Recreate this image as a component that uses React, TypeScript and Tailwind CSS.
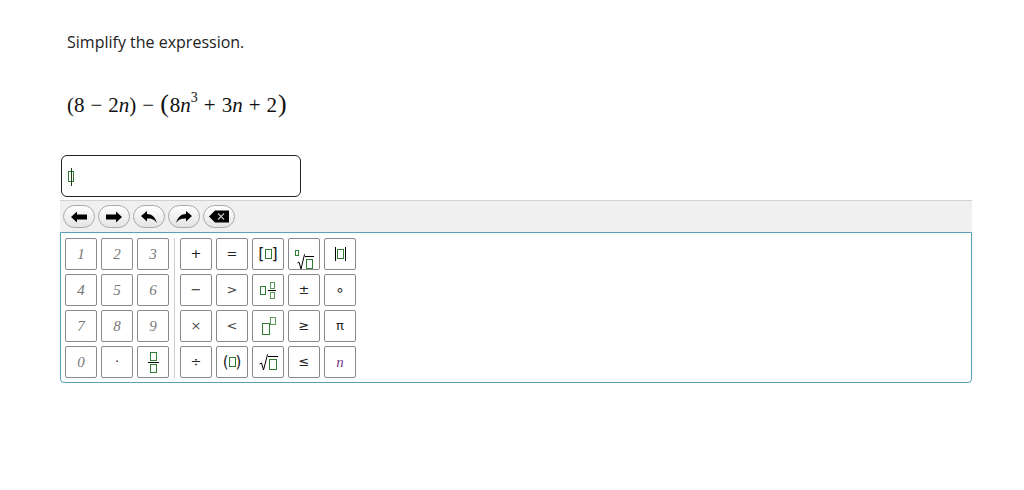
import React from 'react';

const Box = ({ c = 'border-[#2e7d32]', w = 'w-[7px]', h = 'h-[10px]' }: { c?: string; w?: string; h?: string }) => (
  <span className={`inline-block shrink-0 ${w} ${h} border ${c} box-border`} />
);

const Key: React.FC<{ children: React.ReactNode; className?: string }> = ({ children, className = '' }) => (
  <div
    className={`w-[32px] h-[32px] border border-[#8a8a8a] rounded-[2px] bg-white flex items-center justify-center ${className}`}
  >
    {children}
  </div>
);

const Num = ({ v }: { v: string }) => (
  <Key>
    <span className="italic text-[15px] text-[#777]" style={{ fontFamily: '"Liberation Serif", serif' }}>
      {v}
    </span>
  </Key>
);

const Op = ({ v, cls = '' }: { v: string; cls?: string }) => (
  <Key>
    <span className={`text-[13px] text-[#222] ${cls}`} style={{ fontFamily: '"DejaVu Sans", sans-serif' }}>
      {v}
    </span>
  </Key>
);

const Frac = () => (
  <span className="flex flex-col items-center leading-none">
    <Box w="w-[7px]" h="h-[9px]" />
    <span className="w-[11px] h-px bg-black my-[1px]" />
    <Box w="w-[7px]" h="h-[9px]" />
  </span>
);

const NavBtn: React.FC<{ children: React.ReactNode }> = ({ children }) => (
  <div className="w-[32px] h-[23px] rounded-full border border-[#a8a8a8] bg-gradient-to-b from-white to-[#e4e4e4] flex items-center justify-center">
    {children}
  </div>
);

const Left = () => (
  <svg width="18" height="12" viewBox="0 0 18 12">
    <path d="M1 6 L7 0.5 V3.5 H17 V8.5 H7 V11.5 Z" fill="#000" />
  </svg>
);
const Right = () => (
  <svg width="18" height="12" viewBox="0 0 18 12">
    <path d="M17 6 L11 0.5 V3.5 H1 V8.5 H11 V11.5 Z" fill="#000" />
  </svg>
);
const Undo = () => (
  <svg width="18" height="14" viewBox="0 0 18 14">
    <path d="M1 6 L7 1 V4 C12 4 15 7 17 13 C14 9 11 8.5 7 8.5 V11.5 Z" fill="#000" />
  </svg>
);
const Redo = () => (
  <svg width="18" height="14" viewBox="0 0 18 14">
    <path d="M17 6 L11 1 V4 C6 4 3 7 1 13 C4 9 7 8.5 11 8.5 V11.5 Z" fill="#000" />
  </svg>
);
const Del = () => (
  <svg width="22" height="13" viewBox="0 0 22 13">
    <path d="M1 6.5 L7 0.5 H21 V12.5 H7 Z" fill="#000" />
    <path d="M10 3.5 L16 9.5 M16 3.5 L10 9.5" stroke="#bbb" strokeWidth="1.3" />
  </svg>
);

export default function App() {
  return (
    <div className="w-[1024px] h-[490px] bg-white" style={{ fontFamily: '"Open Sans", sans-serif' }}>
      <div className="pl-[60px] pr-[52px] pt-[30px]">
        <p className="pl-[7px] text-[16px] leading-[24px] text-[#222]">Simplify the expression.</p>
        <div
          className="pl-[7px] mt-[36px] h-[30px] text-[21px] leading-[30px] text-[#111] flex items-center"
          style={{ fontFamily: '"Liberation Serif", serif' }}
        >
          <span>(8</span>
          <span className="mx-[6px]">−</span>
          <span>2</span>
          <span className="italic">n</span>
          <span>)</span>
          <span className="mx-[6px]">−</span>
          <span className="text-[26px] leading-none relative -top-[1px] mr-[1px]">(</span>
          <span>8</span>
          <span className="italic">n</span>
          <span className="text-[14px] relative -top-[7px]">3</span>
          <span className="mx-[6px]">+</span>
          <span>3</span>
          <span className="italic">n</span>
          <span className="mx-[6px]">+</span>
          <span>2</span>
          <span className="text-[26px] leading-none relative -top-[1px] ml-[1px]">)</span>
        </div>
        <div className="ml-px mt-[35px] w-[240px] h-[42px] border border-[#222] rounded-[6px] flex items-center pl-[6px]">
          <span className="relative flex items-center">
            <Box w="w-[6px]" h="h-[11px]" />
            <span className="absolute left-[3px] -top-[3px] w-px h-[18px] bg-[#1b3d1b]" />
          </span>
        </div>
        <div className="mt-[3px] h-[32px] bg-[#f0f0f0] border-t border-[#d2d2d2] flex items-center gap-[3px] pl-[3px]">
          <NavBtn><Left /></NavBtn>
          <NavBtn><Right /></NavBtn>
          <NavBtn><Undo /></NavBtn>
          <NavBtn><Redo /></NavBtn>
          <NavBtn><Del /></NavBtn>
        </div>
        <div className="h-[151px] border border-[#5b9fbb] rounded-b-[4px] flex pt-[5px] pl-[4px]">
          <div className="grid grid-cols-3 gap-[4px] auto-rows-[32px] pr-[5px] border-r border-[#cfcfcf] h-[140px]">
            <Num v="1" /><Num v="2" /><Num v="3" />
            <Num v="4" /><Num v="5" /><Num v="6" />
            <Num v="7" /><Num v="8" /><Num v="9" />
            <Num v="0" />
            <Op v="·" />
            <Key><Frac /></Key>
          </div>
          <div className="grid grid-cols-5 gap-[4px] auto-rows-[32px] pl-[5px]">
            <Op v="+" />
            <Op v="=" />
            <Key>
              <span className="flex items-center text-[16px] text-[#222]" style={{ fontFamily: '"DejaVu Sans", sans-serif' }}>
                [<Box w="w-[7px]" h="h-[10px]" />]
              </span>
            </Key>
            <Key>
              <span className="flex items-end">
                <span className="mb-[8px]"><Box w="w-[4px]" h="h-[6px]" /></span>
                <svg width="8" height="16" viewBox="0 0 8 16" className="-ml-[2px] shrink-0">
                  <path d="M0.5 9 L2 8 L4 15 L7.5 0.5 H8" stroke="#000" fill="none" strokeWidth="1" />
                </svg>
                <span className="border-t border-black pt-[2px] px-[1px] flex items-center mb-[1px]">
                  <Box w="w-[7px]" h="h-[10px]" />
                </span>
              </span>
            </Key>
            <Key>
              <span className="flex items-center gap-[1px]">
                <span className="w-px h-[14px] bg-black shrink-0" />
                <Box w="w-[7px]" h="h-[10px]" />
                <span className="w-px h-[14px] bg-black shrink-0" />
              </span>
            </Key>

            <Op v="−" />
            <Op v=">" cls="text-[#444]" />
            <Key>
              <span className="flex items-center gap-[2px]">
                <Box w="w-[6px]" h="h-[9px]" />
                <span className="flex flex-col items-center">
                  <Box w="w-[5px]" h="h-[7px]" c="border-[#5a9a5a]" />
                  <span className="w-[8px] h-px bg-black my-[1px]" />
                  <Box w="w-[5px]" h="h-[7px]" c="border-[#5a9a5a]" />
                </span>
              </span>
            </Key>
            <Op v="±" />
            <Op v="∘" cls="text-[15px]" />

            <Op v="×" cls="text-[#555]" />
            <Op v="<" cls="text-[#444]" />
            <Key>
              <span className="flex items-end h-[18px] pl-[1px]">
                <span className="flex"><Box w="w-[8px]" h="h-[12px]" /></span>
                <span className="flex self-start">
                  <Box w="w-[6px]" h="h-[8px]" c="border-[#5a9a5a]" />
                </span>
              </span>
            </Key>
            <Op v="≥" />
            <Op v="π" />

            <Op v="÷" />
            <Key>
              <span className="flex items-center text-[15px] text-[#222]" style={{ fontFamily: '"DejaVu Sans", sans-serif' }}>
                (<Box w="w-[7px]" h="h-[10px]" />)
              </span>
            </Key>
            <Key>
              <span className="flex items-end">
                <svg width="9" height="17" viewBox="0 0 9 17" className="shrink-0">
                  <path d="M0.5 10 L2.5 9 L4.5 16 L8.5 0.5 H9" stroke="#000" fill="none" strokeWidth="1" />
                </svg>
                <span className="border-t border-black pt-[2px] px-[1px] flex items-center mb-[1px]">
                  <Box w="w-[8px]" h="h-[11px]" />
                </span>
              </span>
            </Key>
            <Op v="≤" />
            <Key>
              <span className="italic text-[15px] text-[#7a3a8a]" style={{ fontFamily: '"Liberation Serif", serif' }}>
                n
              </span>
            </Key>
          </div>
        </div>
      </div>
    </div>
  );
}
